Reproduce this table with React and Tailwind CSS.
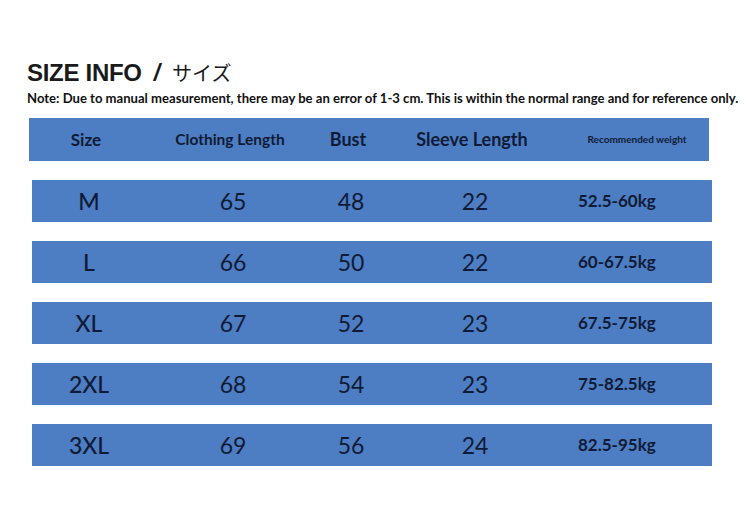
import React from 'react';

const rows = [
  { size: 'M', length: '65', bust: '48', sleeve: '22', weight: '52.5-60kg' },
  { size: 'L', length: '66', bust: '50', sleeve: '22', weight: '60-67.5kg' },
  { size: 'XL', length: '67', bust: '52', sleeve: '23', weight: '67.5-75kg' },
  { size: '2XL', length: '68', bust: '54', sleeve: '23', weight: '75-82.5kg' },
  { size: '3XL', length: '69', bust: '56', sleeve: '24', weight: '82.5-95kg' },
];

const cols = 'grid grid-cols-[114px_174px_62px_186px_144px] items-center';

const App = () => {
  return (
    <div className="w-[750px] h-[516px] bg-white overflow-hidden font-['Lato',sans-serif] text-[#0f1b36]">
      {/* 标题 */}
      <div className="pt-[58px] pl-[27px] flex items-baseline h-[88px]">
        <span className="font-['Liberation_Sans',Arial,sans-serif] font-bold text-[24px] leading-[30px] tracking-[-0.3px] text-[#1a1a1a]">
          SIZE INFO
        </span>
        <span className="ml-[12px] font-['Liberation_Sans',Arial,sans-serif] font-bold text-[23px] leading-[30px] text-[#1a1a1a] italic">/</span>
        <span className="ml-[12px] font-['Noto_Sans_CJK_JP',sans-serif] text-[20px] leading-[30px] text-[#1a1a1a]">サイズ</span>
      </div>
      <p className="pl-[27px] mt-[3px] text-[13.1px] font-bold leading-[15px] whitespace-nowrap text-[#111]">
        Note: Due to manual measurement, there may be an error of 1-3 cm. This is within the normal range and for reference only.
      </p>

      {/* 表头 */}
      <div className={`${cols} ml-[29px] mt-[12px] w-[680px] h-[43px] bg-[#4d7dc3] font-bold`}>
        <div className="text-center text-[17px]">Size</div>
        <div className="text-center text-[15.5px]">Clothing Length</div>
        <div className="text-center text-[18px]">Bust</div>
        <div className="text-center text-[18px]">Sleeve Length</div>
        <div className="text-center text-[10px]">Recommended weight</div>
      </div>

      {/* 数据行 */}
      <div className="ml-[32px] mt-[19px] flex flex-col gap-[19px]">
        {rows.map((r) => (
          <div key={r.size} className={`${cols} w-[680px] h-[42px] bg-[#4d7dc3]`}>
            <div className="text-center text-[23px] font-medium">{r.size}</div>
            <div className="text-center text-[23px]">{r.length}</div>
            <div className="text-center text-[23px]">{r.bust}</div>
            <div className="text-center text-[23px]">{r.sleeve}</div>
            <div className="pl-[10px] text-[17px] font-bold">{r.weight}</div>
          </div>
        ))}
      </div>
    </div>
  );
};

export default App;
